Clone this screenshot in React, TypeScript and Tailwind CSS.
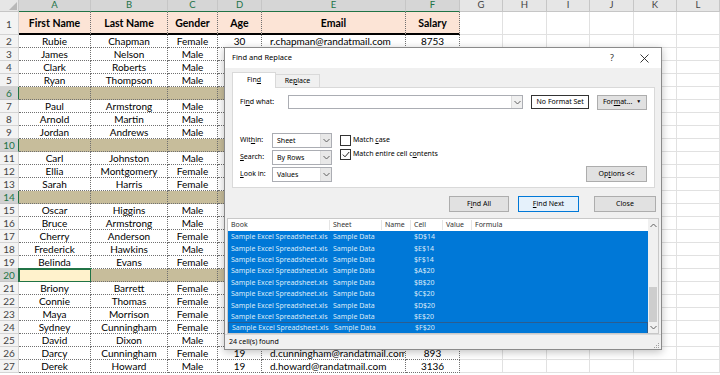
import React from 'react';

const COLS = ['w-[72px]', 'w-[77px]', 'w-[50px]', 'w-[44px]', 'w-[144px]', 'w-[54px]'];
const EXTRA = ['w-[43px]', 'w-[44px]', 'w-[43px]', 'w-[44px]', 'w-[43px]', 'flex-1'];
const LETTERS = ['A', 'B', 'C', 'D', 'E', 'F'];
const EXTRA_LETTERS = ['G', 'H', 'I', 'J', 'K', 'L'];
const ALIGN = ['justify-center', 'justify-center', 'justify-center', 'justify-center', 'justify-start pl-[8px]', 'justify-center'];
const HEAD = ['First Name', 'Last Name', 'Gender', 'Age', 'Email', 'Salary'];

// null = tan separator row (selected by the search)
const data: (string[] | null)[] = [
  ['Rubie', 'Chapman', 'Female', '30', 'r.chapman@randatmail.com', '8753'],
  ['James', 'Nelson', 'Male'],
  ['Clark', 'Roberts', 'Male'],
  ['Ryan', 'Thompson', 'Male'],
  null,
  ['Paul', 'Armstrong', 'Male'],
  ['Arnold', 'Martin', 'Male'],
  ['Jordan', 'Andrews', 'Male'],
  null,
  ['Carl', 'Johnston', 'Male'],
  ['Ellia', 'Montgomery', 'Female'],
  ['Sarah', 'Harris', 'Female'],
  null,
  ['Oscar', 'Higgins', 'Male'],
  ['Bruce', 'Armstrong', 'Male'],
  ['Cherry', 'Anderson', 'Female'],
  ['Frederick', 'Hawkins', 'Male'],
  ['Belinda', 'Evans', 'Female'],
  null,
  ['Briony', 'Barrett', 'Female'],
  ['Connie', 'Thomas', 'Female'],
  ['Maya', 'Morrison', 'Female'],
  ['Sydney', 'Cunningham', 'Female'],
  ['David', 'Dixon', 'Male'],
  ['Darcy', 'Cunningham', 'Female', '19', 'd.cunningham@randatmail.com', '893'],
  ['Derek', 'Howard', 'Male', '19', 'd.howard@randatmail.com', '3136'],
];

const found = ['$D$14', '$E$14', '$F$14', '$A$20', '$B$20', '$C$20', '$D$20', '$E$20', '$F$20'];

const Chev = ({ up }: { up?: boolean }) => (
  <svg width="7" height="5" viewBox="0 0 7 5">
    <path d={up ? 'M0.5 4 L3.5 1 L6.5 4' : 'M0.5 1 L3.5 4 L6.5 1'} fill="none" stroke="#606060" strokeWidth="1" />
  </svg>
);

const Check = ({ checked }: { checked?: boolean }) => (
  <span className="flex h-[11px] w-[11px] items-center justify-center border border-[#333] bg-white">
    {checked && (
      <svg width="8" height="7" viewBox="0 0 8 7">
        <path d="M0.8 3.6 L3 5.8 L7.2 1" fill="none" stroke="#222" strokeWidth="1" />
      </svg>
    )}
  </span>
);

const Select = ({ value }: { value: string }) => (
  <div className="flex h-[15px] w-[60px] border border-[#abadb3] bg-white">
    <span className="flex-1 pl-[4px] leading-[13px]">{value}</span>
    <span className="flex w-[11px] items-center justify-center border-l border-[#dcdcdc] bg-[#e8e8e8]">
      <Chev />
    </span>
  </div>
);

const SheetRow = ({ n, cells }: { n: number; cells: string[] | null }) => {
  const sel = cells === null;
  return (
    <div className="flex h-[13px] shrink-0">
      <div
        className={`flex w-[19px] items-center justify-center border-r border-b text-[10px] ${
          sel ? 'border-b-[#c6c6c6] border-r-[#217346] bg-[#d2d2d2] text-[#217346]' : 'border-[#d4d4d4] bg-[#f3f3f3] text-[#444]'
        }`}
      >
        {n}
      </div>
      {COLS.map((w, i) => (
        <div
          key={i}
          className={`flex ${w} items-center ${ALIGN[i]} overflow-hidden whitespace-nowrap border-r border-b border-dotted border-[#707070] ${
            sel ? (n === 20 && i === 0 ? 'bg-[#fff2cc] outline-2 -outline-offset-1 outline-[#217346]' : 'bg-[#c7bd9b]') : 'bg-white'
          }`}
        >
          {cells?.[i]}
        </div>
      ))}
      {EXTRA.map((w, i) => (
        <div key={i} className={`${w} border-r border-b border-[#e1e1e1] bg-white`} />
      ))}
    </div>
  );
};

export default function App() {
  return (
    <div className="relative h-[375px] w-[720px] overflow-hidden bg-white font-['Lato',sans-serif] text-[10px] text-black">
      {/* column letters */}
      <div className="flex h-[12px]">
        <div className="flex w-[19px] items-end justify-end border-r border-b border-[#c6c6c6] bg-[#e6e6e6] p-[1px]">
          <svg width="8" height="8" viewBox="0 0 8 8">
            <path d="M8 0 L8 8 L0 8 Z" fill="#b8b8b8" />
          </svg>
        </div>
        {COLS.map((w, i) => (
          <div key={i} className={`flex ${w} items-center justify-center border-r border-b border-r-[#c6c6c6] border-b-[#217346] bg-[#d6d6d6] text-[9.5px] text-[#217346]`}>
            {LETTERS[i]}
          </div>
        ))}
        {EXTRA.map((w, i) => (
          <div key={i} className={`flex ${w} items-center justify-center border-r border-b border-[#c6c6c6] bg-[#e6e6e6] text-[9.5px] text-[#444]`}>
            {EXTRA_LETTERS[i]}
          </div>
        ))}
      </div>

      {/* header row 1 */}
      <div className="flex h-[23px]">
        <div className="flex w-[19px] items-center justify-center border-r border-b border-[#d4d4d4] bg-[#f3f3f3] pt-[3px] text-[10px] text-[#444]">1</div>
        {COLS.map((w, i) => (
          <div
            key={i}
            className={`flex ${w} items-center justify-center border-r border-b-2 border-dotted border-r-[#707070] border-b-black [border-bottom-style:solid] bg-[#fce4d6] pt-[3px] text-[10.5px] font-bold`}
          >
            {HEAD[i]}
          </div>
        ))}
        {EXTRA.map((w, i) => (
          <div key={i} className={`${w} border-r border-b border-[#e1e1e1]`} />
        ))}
      </div>

      {data.map((cells, i) => (
        <SheetRow key={i} n={i + 2} cells={cells} />
      ))}

      {/* Find and Replace dialog */}
      <div className="absolute left-[224px] top-[47px] flex h-[303px] w-[438px] flex-col border border-[#8a8a8a] bg-[#f0f0f0] font-['Noto_Sans',sans-serif] text-[7px] text-black shadow-[0_2px_8px_rgba(0,0,0,0.25)]">
        <div className="flex h-[20px] shrink-0 items-center bg-white pl-[7px] pr-[1px]">
          <span className="flex-1 text-[7.5px]">Find and Replace</span>
          <span className="w-[32px] text-center text-[9px] text-[#333]">?</span>
          <span className="flex w-[32px] justify-center">
            <svg width="9" height="9" viewBox="0 0 9 9">
              <path d="M0.5 0.5 L8.5 8.5 M8.5 0.5 L0.5 8.5" stroke="#222" strokeWidth="0.9" />
            </svg>
          </span>
        </div>

        <div className="flex h-[19px] shrink-0 items-end pl-[7px]">
          <div className="relative z-10 -mb-px flex h-[16px] w-[44px] items-center justify-center border border-b-0 border-[#d9d9d9] bg-white">
            Fin<u>d</u>
          </div>
          <div className="flex h-[13px] w-[44px] items-center justify-center border border-b-0 border-l-0 border-[#d9d9d9] bg-[#f0f0f0]">
            Re<u>p</u>lace
          </div>
        </div>

        <div className="ml-[7px] mr-[6px] flex h-[101px] shrink-0 flex-col border border-[#d9d9d9] bg-white px-[7px] pt-[7px]">
          <div className="flex h-[14px] items-center">
            <span className="w-[48px]">Fi<u>n</u>d what:</span>
            <div className="flex h-[14px] w-[236px] border border-[#abadb3]">
              <span className="flex-1" />
              <span className="flex w-[11px] items-center justify-center border-l border-[#dcdcdc] bg-[#f0f0f0]">
                <Chev />
              </span>
            </div>
            <div className="ml-[8px] flex h-[14px] w-[58px] items-center justify-center border border-[#333]">No Format Set</div>
            <div className="ml-[8px] flex h-[15px] w-[50px] items-center justify-center gap-[4px] border border-[#adadad] bg-[#e1e1e1]">
              <span>
                For<u>m</u>at...
              </span>
              <span className="text-[5px]">▼</span>
            </div>
          </div>

          <div className="mt-[24px] flex items-end">
            <div className="flex flex-col gap-[2px]">
              <div className="flex items-center">
                <span className="w-[32px]">
                  Wit<u>h</u>in:
                </span>
                <Select value="Sheet" />
              </div>
              <div className="flex items-center">
                <span className="w-[32px]">
                  <u>S</u>earch:
                </span>
                <Select value="By Rows" />
              </div>
              <div className="flex items-center">
                <span className="w-[32px]">
                  <u>L</u>ook in:
                </span>
                <Select value="Values" />
              </div>
            </div>
            <div className="ml-[8px] flex flex-col gap-[3px] self-start pt-[2px]">
              <label className="flex items-center gap-[2px]">
                <Check />
                <span>
                  Match <u>c</u>ase
                </span>
              </label>
              <label className="flex items-center gap-[2px]">
                <Check checked />
                <span>
                  Match entire cell c<u>o</u>ntents
                </span>
              </label>
            </div>
            <div className="ml-auto flex h-[16px] w-[61px] items-center justify-center border border-[#adadad] bg-[#e1e1e1]">
              Op<u>t</u>ions &lt;&lt;
            </div>
          </div>
        </div>

        <div className="mr-[5px] mt-[8px] flex h-[16px] shrink-0 justify-end">
          <button className="h-[16px] w-[60px] border border-[#adadad] bg-[#e1e1e1]">
            F<u>i</u>nd All
          </button>
          <button className="ml-[9px] h-[16px] w-[61px] border border-[#0078d7] bg-[#e5f1fb]">
            <u>F</u>ind Next
          </button>
          <button className="ml-[15px] h-[16px] w-[62px] border border-[#adadad] bg-[#e1e1e1]">Close</button>
        </div>

        <div className="mx-[2px] mt-[6px] flex h-[116px] shrink-0 border border-[#c8c8c8] bg-white">
          <div className="flex flex-1 flex-col overflow-hidden">
            <div className="flex h-[12px] shrink-0 items-center text-[#333]">
              <span className="w-[102px] border-r border-[#e5e5e5] pl-[3px]">Book</span>
              <span className="w-[52px] border-r border-[#e5e5e5] pl-[3px]">Sheet</span>
              <span className="w-[29px] border-r border-[#e5e5e5] pl-[3px]">Name</span>
              <span className="w-[32px] border-r border-[#e5e5e5] pl-[3px]">Cell</span>
              <span className="w-[29px] border-r border-[#e5e5e5] pl-[3px]">Value</span>
              <span className="pl-[3px]">Formula</span>
            </div>
            {found.map((c, i) => (
              <div
                key={c}
                className={`flex h-[11.4px] shrink-0 items-center bg-[#0078d7] leading-[11px] text-[#dbeaf8] ${
                  i === found.length - 1 ? 'border border-[#2c5d8f]' : ''
                }`}
              >
                <span className="w-[102px] whitespace-nowrap pl-[3px]">Sample Excel Spreadsheet.xls</span>
                <span className="w-[52px] whitespace-nowrap pl-[3px]">Sample Data</span>
                <span className="w-[29px]" />
                <span className="w-[32px] pl-[3px]">{c}</span>
              </div>
            ))}
          </div>
          <div className="flex w-[10px] flex-col bg-[#f0f0f0]">
            <div className="flex h-[12px] items-center justify-center">
              <Chev up />
            </div>
            <div className="flex flex-1 flex-col justify-end">
              <div className="mx-[1px] h-[35px] bg-[#cdcdcd]" />
            </div>
            <div className="flex h-[11px] items-center justify-center">
              <Chev />
            </div>
          </div>
        </div>

        <div className="flex flex-1 items-center border-t border-[#dadada] pl-[4px]">
          <span className="flex-1">24 cell(s) found</span>
          <svg width="8" height="8" viewBox="0 0 8 8" className="mr-[1px] self-end">
            <g fill="#a0a0a0">
              <rect x="6" y="2" width="1" height="1" />
              <rect x="4" y="4" width="1" height="1" />
              <rect x="6" y="4" width="1" height="1" />
              <rect x="2" y="6" width="1" height="1" />
              <rect x="4" y="6" width="1" height="1" />
              <rect x="6" y="6" width="1" height="1" />
            </g>
          </svg>
        </div>
      </div>
    </div>
  );
}
